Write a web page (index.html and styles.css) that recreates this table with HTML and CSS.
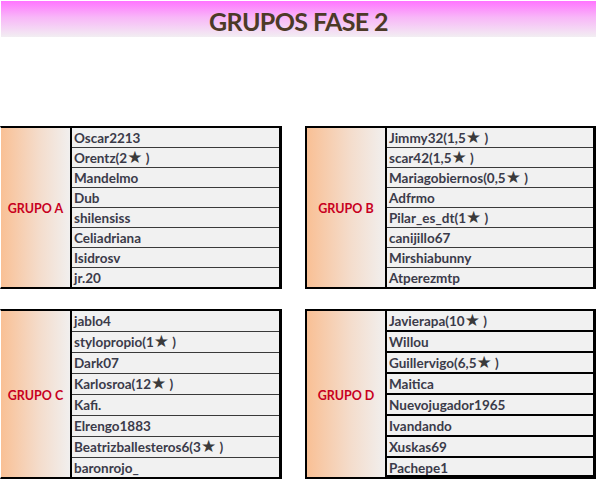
FILE: index.html
```html
<!DOCTYPE html>
<html lang="es">
<head>
<meta charset="utf-8">
<title>Grupos Fase 2</title>
<link rel="stylesheet" href="styles.css">
</head>
<body>
<header class="banner"><h1 class="title">GRUPOS FASE 2</h1></header>
<main class="groups">
  <section class="group group-open">
    <div class="label">GRUPO A</div>
    <ul class="names">
      <li>Oscar2213</li>
      <li>Orentz(2<span class="star">★</span> )</li>
      <li>Mandelmo</li>
      <li>Dub</li>
      <li>shilensiss</li>
      <li>Celiadriana</li>
      <li>Isidrosv</li>
      <li>jr.20</li>
    </ul>
  </section>
  <section class="group group-boxed">
    <div class="label">GRUPO B</div>
    <ul class="names">
      <li>Jimmy32(1,5<span class="star">★</span> )</li>
      <li>scar42(1,5<span class="star">★</span> )</li>
      <li>Mariagobiernos(0,5<span class="star">★</span> )</li>
      <li>Adfrmo</li>
      <li>Pilar_es_dt(1<span class="star">★</span> )</li>
      <li>canijillo67</li>
      <li>Mirshiabunny</li>
      <li>Atperezmtp</li>
    </ul>
  </section>
  <section class="group group-open tall">
    <div class="label">GRUPO C</div>
    <ul class="names">
      <li>jablo4</li>
      <li>stylopropio(1<span class="star">★</span> )</li>
      <li>Dark07</li>
      <li>Karlosroa(12<span class="star">★</span> )</li>
      <li>Kafi.</li>
      <li>Elrengo1883</li>
      <li>Beatrizballesteros6(3<span class="star">★</span> )</li>
      <li>baronrojo_</li>
    </ul>
  </section>
  <section class="group group-boxed tall thick">
    <div class="label">GRUPO D</div>
    <ul class="names">
      <li>Javierapa(10<span class="star">★</span> )</li>
      <li>Willou</li>
      <li>Guillervigo(6,5<span class="star">★</span> )</li>
      <li>Maitica</li>
      <li>Nuevojugador1965</li>
      <li>Ivandando</li>
      <li>Xuskas69</li>
      <li>Pachepe1</li>
    </ul>
  </section>
</main>
</body>
</html>
```
FILE: styles.css
```css
* { box-sizing: border-box; }
html, body { margin: 0; padding: 0; background: #ffffff; }
body {
  font-family: Lato, "Open Sans", "DejaVu Sans", sans-serif;
  width: 596px;
  height: 479px;
  overflow: hidden;
}
.banner {
  margin: 1px 0 0 1px;
  height: 36px;
  background: linear-gradient(to bottom, #ff74ff 0%, #f8b6f8 45%, #f2eef2 100%);
  display: flex;
  align-items: center;
  justify-content: center;
}
.title {
  margin: 0;
  font-size: 25px;
  font-weight: 700;
  color: #4c3a27;
  letter-spacing: -0.6px;
  padding-top: 3px;
}
.groups {
  margin-top: 89px;
  display: grid;
  grid-template-columns: 282px 291px;
  grid-template-rows: 163px 170px;
  column-gap: 23px;
  row-gap: 20px;
}
.group {
  display: flex;
  border-top: 2px solid #000;
  border-bottom: 2px solid #000;
  border-right: 3px solid #000;
}
.group-open { border-left: 1px solid #fff; }
.group-boxed { border-left: 2px solid #000; }
.label {
  flex: none;
  width: 71px;
  border-right: 2px solid #000;
  background: linear-gradient(to right, #f9c095 0%, #f4dccb 55%, #f1efee 100%);
  color: #c8001e;
  font-weight: 700;
  font-size: 12.5px;
  display: flex;
  align-items: center;
  justify-content: center;
  padding-top: 2px;
}
.group-boxed .label { width: 80px; }
.names {
  list-style: none;
  margin: 0;
  padding: 0;
  flex: 1;
  background: #f1f1f1;
  display: flex;
  flex-direction: column;
}
.names li {
  height: 20px;
  border-bottom: 1px solid #3a3a3a;
  padding-left: 2px;
  font-size: 13.5px;
  font-weight: 700;
  color: #3b3b4a;
  line-height: 20px;
  white-space: nowrap;
}
.names li:last-child { border-bottom: 0; height: 19px; }
.tall .names li { height: 21px; line-height: 21px; }
.tall .names li:last-child { height: 19px; }
.thick .names li { border-bottom: 2px solid #000; }
.star {
  font-family: "DejaVu Sans", sans-serif;
  color: #3a3a3a;
  font-size: 17px;
  line-height: 1;
}
```
